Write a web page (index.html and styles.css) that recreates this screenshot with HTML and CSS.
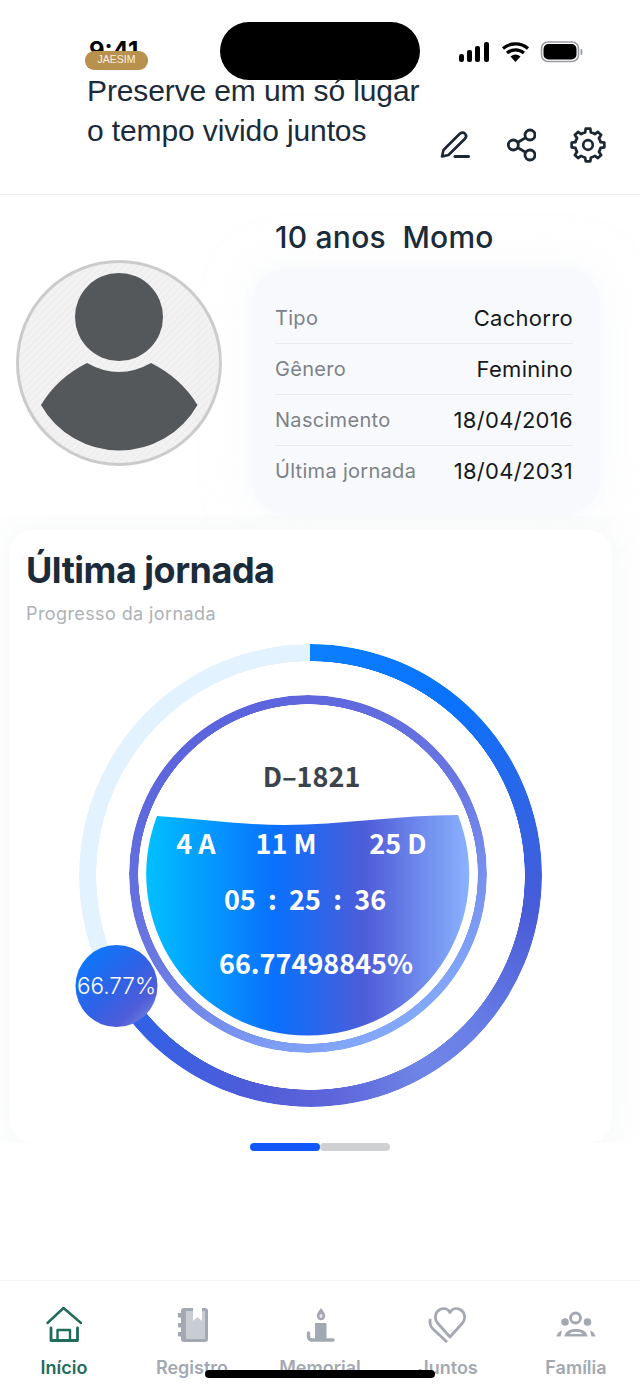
FILE: index.html
```html
<!DOCTYPE html>
<html lang="pt">

<head>
    <meta charset="UTF-8">
    <meta name="viewport" content="width=device-width, initial-scale=1.0">
    <title>Início</title>
    <link rel="stylesheet" href="styles.css">
</head>

<body>
    <div class="page">
        <div class="status-bar">
            <span class="time">9:41</span>
            <div class="notch"></div>
            <svg class="status-icons" width="125" height="22" viewBox="0 0 125 22">
                <rect x="0" y="13" width="5" height="8" rx="2.2" fill="#000" />
                <rect x="8" y="9" width="5" height="12" rx="2" fill="#000" />
                <rect x="16" y="5" width="5" height="16" rx="2" fill="#000" />
                <rect x="25" y="1" width="5" height="20" rx="2" fill="#000" />
                <path d="M44 7.5a19 19 0 0 1 25 0M48 12a13 13 0 0 1 17 0" fill="none" stroke="#000" stroke-width="3.2" />
                <path d="M51.5 15.5a8 8 0 0 1 10 0L56.5 21z" fill="#000" />
                <rect x="82.5" y="1" width="37" height="19.5" rx="6.5" fill="#fff" stroke="#9a9da3" stroke-width="1.6" />
                <rect x="84.5" y="3" width="33" height="15.5" rx="5" fill="#000" />
                <rect x="121.5" y="8" width="1.8" height="6" rx="0.9" fill="#9a9da3" />
            </svg>
        </div>

        <header class="header">
            <div class="header-text">
                <span class="badge">JAESIM</span>
                <h1 class="slogan">Preserve em um só lugar<br>o tempo vivido juntos</h1>
            </div>
            <div class="header-actions">
                <svg width="32" height="32" viewBox="0 0 32 32" fill="none" stroke="#1b2733" stroke-width="2.6" stroke-linecap="round" stroke-linejoin="round">
                    <path d="M4 25.5l1.5-6.5L21.5 3c1.8-1.8 4-1.8 5.5-.3s1.5 3.5-.3 5.3L10.5 24z" />
                    <path d="M17 25.5h13.5" stroke-width="3" />
                </svg>
                <svg width="32" height="36" viewBox="0 0 32 36" fill="none" stroke="#1b2733" stroke-width="2.8">
                    <circle cx="26" cy="8" r="5" />
                    <circle cx="9.3" cy="18" r="5" />
                    <circle cx="26" cy="28" r="5" />
                    <path d="M13.5 15.5l8.500-5M13.500 20.500l8.500 5" />
                </svg>
                <svg width="36" height="36" viewBox="0 0 24 24" fill="none" stroke="#1b2733" stroke-width="1.8" stroke-linejoin="round">
                    <path d="M13.53 1.11L13.93 3.62A8.6 8.6 0 0 1 16.56 4.71L18.62 3.22L20.78 5.38L19.29 7.44A8.6 8.6 0 0 1 20.38 10.07L22.89 10.47V13.53L20.38 13.93A8.6 8.6 0 0 1 19.29 16.56L20.78 18.62L18.62 20.78L16.56 19.29A8.6 8.6 0 0 1 13.93 20.38L13.53 22.89H10.47L10.07 20.38A8.6 8.6 0 0 1 7.44 19.29L5.38 20.78L3.22 18.62L4.71 16.56A8.6 8.6 0 0 1 3.62 13.93L1.11 13.53V10.47L3.62 10.07A8.6 8.6 0 0 1 4.71 7.44L3.22 5.38L5.38 3.22L7.44 4.71A8.6 8.6 0 0 1 10.07 3.62L10.47 1.11Z" />
                    <circle cx="12" cy="12" r="3.2" />
                </svg>
            </div>
        </header>

        <section class="profile">
            <svg class="avatar" width="206" height="206" viewBox="0 0 206 206">
                <defs>
                    <pattern id="hatch" width="5" height="5" patternUnits="userSpaceOnUse" patternTransform="rotate(45)">
                        <rect width="5" height="5" fill="#f2f2f2" />
                        <rect width="1" height="5" fill="#ebebeb" />
                    </pattern>
                </defs>
                <circle cx="103" cy="103" r="101.5" fill="url(#hatch)" stroke="#cbcbcb" stroke-width="3" />
                <circle cx="103" cy="57" r="44" fill="#54585a" />
                <path d="M71 103Q103 121 135 103Q165 118 181.5 145A90 90 0 0 1 25 145Q41 118 71 103Z" fill="#54585a" />
            </svg>
            <div class="pet">
                <h2 class="pet-name">10 anos&nbsp; Momo</h2>
                <div class="pet-card">
                    <div class="pet-row"><span class="pet-label">Tipo</span><span class="pet-value">Cachorro</span></div>
                    <div class="pet-row"><span class="pet-label">Gênero</span><span class="pet-value">Feminino</span></div>
                    <div class="pet-row"><span class="pet-label">Nascimento</span><span class="pet-value">18/04/2016</span></div>
                    <div class="pet-row"><span class="pet-label">Última jornada</span><span class="pet-value">18/04/2031</span></div>
                </div>
            </div>
        </section>

        <div class="journey-wrap">
            <section class="journey">
                <h2 class="journey-title">Última jornada</h2>
                <p class="journey-sub">Progresso da jornada</p>
                <div class="chart">
                    <div class="ring-outer"></div>
                    <div class="ring-inner"></div>
                    <svg class="chart-svg" width="602" height="503" viewBox="10 640 602 503">
                        <defs>
                            <linearGradient id="water" x1="146" y1="0" x2="469" y2="0" gradientUnits="userSpaceOnUse">
                                <stop offset="0" stop-color="#00c0ff" />
                                <stop offset="0.4" stop-color="#0a70fd" />
                                <stop offset="0.62" stop-color="#3f60e0" />
                                <stop offset="0.68" stop-color="#4f5cd8" />
                                <stop offset="1" stop-color="#8ab2fd" />
                            </linearGradient>
                            <linearGradient id="bubble" x1="0" y1="0" x2="1" y2="1">
                                <stop offset="0.1" stop-color="#0a78fc" />
                                <stop offset="0.5" stop-color="#2f62e6" />
                                <stop offset="0.75" stop-color="#4f5cd8" />
                                <stop offset="1" stop-color="#7f9ae8" />
                            </linearGradient>
                        </defs>
                        <path d="M157 816C200 819 240 825 285 825C340 825 400 815 458 815A161.5 161.5 0 1 1 157 816Z" fill="url(#water)" />
                        <text class="d-day" x="311.5" y="787">D–1821</text>
                        <text class="water-text" x="196" y="854">4 A</text>
                        <text class="water-text" x="286" y="854">11 M</text>
                        <text class="water-text" x="398" y="854">25 D</text>
                        <text class="water-text" x="305" y="910">05 &#160;: &#160;25 &#160;: &#160;36</text>
                        <text class="water-text" x="316" y="974">66.77498845%</text>
                        <circle cx="116.5" cy="986" r="41" fill="url(#bubble)" />
                        <text class="bubble-text" x="116.5" y="994">66.77%</text>
                    </svg>
                </div>
            </section>
        </div>

        <div class="pager">
            <span class="pager-on"></span>
            <span class="pager-off"></span>
        </div>

        <nav class="tabs">
            <div class="tab active">
                <svg width="36" height="36" viewBox="0 0 36 36" fill="none" stroke="#1f6b5c" stroke-width="2.4" stroke-linecap="round" stroke-linejoin="round">
                    <path d="M1.5 16L17.5 1 35 16" />
                    <path d="M5 21v12.5h26.5V21" stroke-width="2.8" />
                    <path d="M11.5 33.5V23h12.5v10.5" />
                </svg>
                <span>Início</span>
            </div>
            <div class="tab">
                <svg width="36" height="36" viewBox="0 0 36 36">
                    <rect x="7" y="1" width="27" height="34" rx="3" fill="#a3a9b2" />
                    <rect x="12" y="4" width="19" height="28" fill="#c9ccd2" />
                    <path d="M19 1h9v13l-4.5-4-4.5 4z" fill="#fff" />
                    <rect x="4" y="6" width="6" height="4.5" fill="#a3a9b2" />
                    <rect x="4" y="16" width="6" height="4.5" fill="#a3a9b2" />
                    <rect x="4" y="25" width="6" height="4.5" fill="#a3a9b2" />
                </svg>
                <span>Registro</span>
            </div>
            <div class="tab">
                <svg width="36" height="36" viewBox="0 0 36 36" fill="#a3a9b2">
                    <path d="M19 1c2.8 3.5 4.2 5.8 4.2 8a4.2 4.2 0 0 1-8.4 0c0-2.2 1.4-4.5 4.2-8z" />
                    <ellipse cx="19" cy="9" rx="1.5" ry="2" fill="#e4e6e9" />
                    <rect x="13" y="16" width="11.5" height="16" />
                    <path d="M6.5 26v3.5a3.5 3.5 0 0 0 3.5 3.5h21" fill="none" stroke="#a3a9b2" stroke-width="3.4" stroke-linecap="round" />
                </svg>
                <span>Memorial</span>
            </div>
            <div class="tab">
                <svg width="40" height="36" viewBox="0 0 40 36" fill="none" stroke="#a3a9b2" stroke-width="2.8" stroke-linejoin="round">
                    <path d="M22 30L9.5 16C6 11.5 7 5 12 2.5c4-2 8-.5 10 3 2-3.5 6-5 10-3 5 2.5 6 9 2.5 13.5z" />
                    <path d="M2.5 12c-1.5 4 0 7 2 9.5L19 35" />
                </svg>
                <span>Juntos</span>
            </div>
            <div class="tab">
                <svg width="40" height="36" viewBox="0 0 40 36" fill="#a3a9b2">
                    <circle cx="19.5" cy="11" r="5" fill="none" stroke="#a3a9b2" stroke-width="2.8" />
                    <circle cx="9" cy="15" r="3.8" />
                    <circle cx="31.5" cy="15" r="3.8" />
                    <path d="M.5 29.5c.5-3 2.5-5 5.5-6l-1.5 6zM39.5 29.5c-.5-3-2.5-5-5.5-6l1.5 6z" />
                    <path d="M8.5 29.5c.5-5 5-7.5 11.5-7.5s11 2.5 11.5 7.5zM13.5 27h13c-1-1.500-3.500-2.200-6.500-2.200s-5.500.7-6.500 2.200z" fill-rule="evenodd" />
                </svg>
                <span>Família</span>
            </div>
        </nav>

        <div class="home-bar"></div>
    </div>
</body>

</html>
```

FILE: styles.css
```css
* {
    box-sizing: border-box;
}
body {
    margin: 0;
    background-color: #fff;
}
h1, h2, p {
    margin: 0;
}
.page {
    position: relative;
    display: flex;
    flex-direction: column;
    width: 640px;
    height: 1391px;
    overflow: hidden;
    font-family: "Inter", sans-serif;
    color: #1b2b3a;
}

/* status bar sits over the header */
.status-bar {
    position: absolute;
    top: 0;
    left: 0;
    width: 100%;
    height: 82px;
}
.time {
    position: absolute;
    left: 89px;
    top: 36px;
    font-size: 24px;
    font-weight: 700;
    color: #000;
}
.notch {
    position: absolute;
    left: 220px;
    top: 22px;
    width: 200px;
    height: 58px;
    border-radius: 29px;
    background-color: #000;
}
.status-icons {
    position: absolute;
    left: 459px;
    top: 41px;
}

.header {
    position: relative;
    display: flex;
    justify-content: space-between;
    align-items: flex-end;
    height: 195px;
    padding: 51px 34px 31px 85px;
    border-bottom: 1px solid #eef0f2;
}
.header-text {
    align-self: flex-start;
}
.badge {
    display: block;
    width: 63px;
    height: 19px;
    border-radius: 9px;
    background-color: #b9914f;
    color: #f6efe2;
    font-family: "Liberation Sans", sans-serif;
    font-size: 10.5px;
    line-height: 16px;
    text-align: center;
}
.slogan {
    margin: 1px 0 0 2px;
    font-family: "Liberation Sans", sans-serif;
    font-size: 30px;
    font-weight: 400;
    line-height: 40px;
    letter-spacing: -0.12px;
    white-space: nowrap;
}
.header-actions {
    display: flex;
    align-items: flex-end;
    gap: 34px;
}

.profile {
    display: flex;
    gap: 30px;
    padding-left: 16px;
}
.avatar {
    margin-top: 65px;
}
.pet-name {
    margin: 22px 0 11px 23px;
    font-size: 30px;
    font-weight: 500;
    line-height: 40px;
    letter-spacing: 0.25px;
}
.pet-card {
    width: 348px;
    height: 247px;
    padding: 25px 27px 0 23px;
    border-radius: 36px;
    background-color: #f8f9fc;
    box-shadow: 0 0 12px 2px #f9fafc, 0 0 36px 12px rgba(248, 249, 251, 0.5);
}
.pet-row {
    display: flex;
    justify-content: space-between;
    align-items: center;
    height: 51px;
    border-bottom: 1px solid #e9ebef;
}
.pet-row:last-child {
    border-bottom-color: transparent;
}
.pet-label {
    font-size: 20px;
    letter-spacing: 0.3px;
    color: #7d8288;
}
.pet-value {
    font-size: 22px;
    letter-spacing: 0.3px;
    color: #15191d;
}

/* clips the card's glow at the bottom edge */
.journey-wrap {
    height: 628px;
    padding: 15px 28px 0 10px;
    overflow: hidden;
}
.journey {
    position: relative;
    width: 602px;
    height: 613px;
    padding-top: 18px;
    border-radius: 24px;
    background-color: #fff;
    box-shadow: 0 0 24px 10px rgba(243, 246, 246, 0.5);
}
.journey-title {
    margin-left: 16px;
    font-size: 36px;
    font-weight: 700;
    line-height: 44px;
    letter-spacing: -0.5px;
}
.journey-sub {
    margin: 10px 0 0 16px;
    font-size: 18px;
    line-height: 24px;
    letter-spacing: 0.4px;
    color: #adb2b8;
}
.chart {
    position: relative;
    width: 602px;
    height: 503px;
    margin-top: 14px;
}
.ring-outer {
    position: absolute;
    left: 69px;
    top: 4px;
    width: 463px;
    height: 463px;
    border-radius: 50%;
    background: conic-gradient(#0a80ff 0deg, #0a72fc 40deg, #2b66e8 70deg, #4a5cd8 100deg, #6a80e6 135deg, #6f85e6 150deg, #5d65da 175deg, #4f5cd8 195deg, #2f62e8 232deg, #2f62e8 240.4deg, #e2f2fe 240.4deg, #e2f2fe 360deg);
    -webkit-mask: radial-gradient(closest-side, transparent calc(100% - 17.5px), #000 calc(100% - 17px));
    mask: radial-gradient(closest-side, transparent calc(100% - 17.5px), #000 calc(100% - 17px));
}
.ring-inner {
    position: absolute;
    left: 119px;
    top: 55px;
    width: 358px;
    height: 358px;
    border-radius: 50%;
    background: linear-gradient(150deg, #5a62dc 10%, #6a78e2 50%, #86aefc 90%);
    -webkit-mask: radial-gradient(closest-side, transparent calc(100% - 9.5px), #000 calc(100% - 9px));
    mask: radial-gradient(closest-side, transparent calc(100% - 9.5px), #000 calc(100% - 9px));
}
.chart-svg {
    position: absolute;
    left: 0;
    top: 0;
}
.d-day {
    font-family: "Noto Sans CJK KR", sans-serif;
    font-size: 27px;
    font-weight: 700;
    fill: #3b444d;
    text-anchor: middle;
}
.water-text {
    font-family: "Noto Sans CJK KR", sans-serif;
    font-size: 27px;
    font-weight: 700;
    fill: #fff;
    text-anchor: middle;
}
.bubble-text {
    font-family: "Inter", sans-serif;
    font-size: 22.5px;
    font-weight: 300;
    fill: #fff;
    text-anchor: middle;
}

.pager {
    display: flex;
    margin-left: 250px;
}
.pager-on,
.pager-off {
    width: 70px;
    height: 8px;
    border-radius: 4px;
}
.pager-on {
    background-color: #1257ff;
}
.pager-off {
    background-color: #d0d1d3;
}

.tabs {
    display: flex;
    height: 111px;
    margin-top: auto;
    padding-top: 26px;
    border-top: 1px solid #f2f3f5;
}
.tab {
    display: flex;
    flex: 1;
    flex-direction: column;
    align-items: center;
    gap: 14px;
    font-size: 18px;
    font-weight: 600;
    line-height: 22px;
    color: #a3a9b2;
}
.tab.active {
    color: #1f6b5c;
}
.home-bar {
    position: absolute;
    left: 205px;
    bottom: 13px;
    width: 230px;
    height: 8px;
    border-radius: 4px;
    background-color: #000;
}
```
